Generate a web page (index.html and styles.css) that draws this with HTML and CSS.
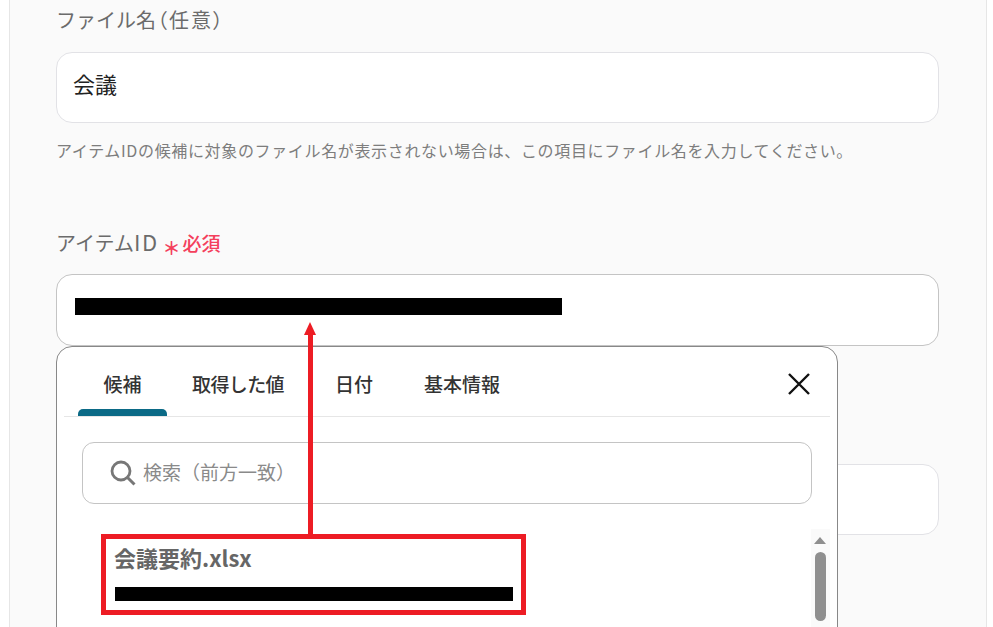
FILE: index.html
```html
<!DOCTYPE html>
<html lang="ja">
<head>
    <meta charset="UTF-8">
    <meta name="viewport" content="width=device-width, initial-scale=1.0">
    <title>ファイル名</title>
    <link rel="stylesheet" href="styles.css">
</head>
<body>
    <div class="panel">
        <!-- ファイル名 -->
        <div class="field field-name">
            <div class="field-label">ファイル名<span class="label-paren">（任意）</span></div>
            <div class="field-input"><span class="input-text">会議</span></div>
            <p class="field-hint">アイテムIDの候補に対象のファイル名が表示されない場合は、この項目にファイル名を入力してください。</p>
        </div>

        <!-- アイテムID -->
        <div class="field field-item">
            <div class="field-label">アイテム<span class="label-latin">ID</span><span class="required"><span class="required-mark">＊</span>必須</span></div>
            <div class="field-input field-input-active"><span class="redact redact-id"></span></div>
        </div>

        <div class="field-input field-behind"></div>
    </div>

    <!-- 候補ポップアップ -->
    <div class="popup">
        <div class="tabs">
            <div class="tab tab-active">候補</div>
            <div class="tab tab-values">取得した値</div>
            <div class="tab">日付</div>
            <div class="tab">基本情報</div>
            <svg class="close" viewBox="0 0 24 24" width="24" height="24">
                <path d="M2 2 L22 22 M22 2 L2 22" stroke="#111" stroke-width="2.4" fill="none"/>
            </svg>
        </div>
        <div class="search">
            <svg class="search-icon" viewBox="0 0 26 26" width="26" height="26">
                <circle cx="11" cy="11" r="9" stroke="#777" stroke-width="2.8" fill="none"/>
                <path d="M17.5 17.5 L24.5 24.5" stroke="#777" stroke-width="3" fill="none"/>
            </svg>
            <span class="search-text">検索（前方一致）</span>
        </div>
        <div class="result">
            <div class="result-name">会議要約.xlsx</div>
            <span class="redact redact-result"></span>
        </div>
        <div class="scrollbar">
            <div class="scroll-up"></div>
            <div class="scroll-thumb"></div>
        </div>
    </div>

    <!-- 注釈 -->
    <div class="note-arrow"></div>
    <div class="note-box"></div>
</body>
</html>
```

FILE: styles.css
```css
html, body {
    margin: 0;
    padding: 0;
    height: 627px;
    overflow: hidden;
    background: #fff;
    font-family: "Noto Sans CJK JP", "Noto Sans", sans-serif;
}

.panel {
    margin: 0 6px 0 9px;
    height: 627px;
    box-sizing: border-box;
    padding: 3px 47px 0 46px;
    background: #fafafa;
    border-left: 1px solid #e6e6e6;
    border-right: 1px solid #e6e6e6;
}

.field-label {
    height: 34px;
    line-height: 34px;
    font-size: 20px;
    color: #6b6b6b;
}

.label-paren {
    font-feature-settings: "palt";
    letter-spacing: 2px;
    margin-left: 1px;
}

.label-latin {
    font-size: 22px;
    letter-spacing: 1.5px;
}

.field-input {
    height: 71px;
    box-sizing: border-box;
    margin-top: 15px;
    padding: 0 16px;
    display: flex;
    align-items: center;
    background: #fff;
    border: 1px solid #e2e2e6;
    border-radius: 16px;
    color: #222;
}

.input-text {
    font-size: 22px;
    line-height: 30px;
    margin-bottom: 10px;
}

.field-hint {
    margin: 15px 0 0;
    font-size: 16px;
    line-height: 24px;
    letter-spacing: 0.65px;
    color: #7d7d7d;
}

.field-item {
    margin-top: 62px;
}

.field-item .field-input {
    margin-top: 16px;
}

.field-input.field-input-active {
    height: 72px;
    border-color: #c4c4c4;
    padding-left: 18px;
}

.field-input.field-behind {
    margin-top: 118px;
}

.required {
    color: #f4405c;
    font-size: 19px;
    font-weight: 500;
    margin-left: 4px;
}

.required-mark {
    font-size: 18px;
    font-weight: 700;
    position: relative;
    top: 4px;
    margin-right: 2px;
}

.redact {
    display: block;
    background: #000;
}

.redact-id {
    width: 487px;
    height: 17px;
    margin-top: -8px;
}

.popup {
    position: absolute;
    left: 56px;
    top: 346px;
    width: 782px;
    height: 300px;
    box-sizing: border-box;
    background: #fff;
    border: 1px solid #888;
    border-radius: 16px;
}

.tabs {
    margin: 0 7px;
    height: 69px;
    display: flex;
    border-bottom: 1px solid #e6e6e6;
    position: relative;
}

.tab {
    padding: 21px 0 0;
    margin-right: 51px;
    font-size: 19px;
    line-height: 32px;
    font-weight: 500;
    color: #333;
}

.tab-values {
    letter-spacing: -0.6px;
}

.tab-active {
    width: 89px;
    margin: 0 25px 0 14px;
    text-align: center;
    position: relative;
    box-sizing: border-box;
}

.tab-active::after {
    content: "";
    position: absolute;
    left: 0;
    bottom: 0;
    width: 89px;
    height: 7px;
    background: #0b6a86;
    border-radius: 5px 5px 0 0;
}

.close {
    position: absolute;
    right: 19px;
    top: 25px;
}

.search {
    margin: 25px 25px 0 25px;
    height: 62px;
    box-sizing: border-box;
    padding-left: 27px;
    display: flex;
    align-items: center;
    gap: 7px;
    border: 1px solid #c4c4c4;
    border-radius: 12px;
}

.search-text {
    font-size: 19px;
    line-height: 28px;
    margin-bottom: 2px;
    color: #8a8a8a;
}

.result {
    margin: 35px 0 0 57px;
}

.result-name {
    font-size: 22px;
    line-height: 36px;
    font-weight: 700;
    color: #666;
}

.redact-result {
    width: 398px;
    height: 14px;
    margin: 12px 0 0 1px;
}

.scrollbar {
    position: absolute;
    left: 754px;
    top: 182px;
    width: 19px;
    height: 120px;
    background: #fafafa;
}

.scroll-up {
    width: 0;
    margin: 8px 0 0 3px;
    border-left: 6.5px solid transparent;
    border-right: 6.5px solid transparent;
    border-bottom: 7px solid #8f8f8f;
}

.scroll-thumb {
    width: 11px;
    height: 69px;
    margin: 8px 0 0 4px;
    background: #8f8f8f;
    border-radius: 6px;
}

.note-arrow {
    position: absolute;
    left: 308px;
    top: 334px;
    width: 5px;
    height: 201px;
    background: #ed1c24;
}

.note-arrow::before {
    content: "";
    position: absolute;
    left: -4px;
    top: -12px;
    border-left: 6.5px solid transparent;
    border-right: 6.5px solid transparent;
    border-bottom: 13px solid #ed1c24;
}

.note-box {
    position: absolute;
    left: 101px;
    top: 534px;
    width: 425px;
    height: 81px;
    box-sizing: border-box;
    border: 5px solid #ed1c24;
}
```
